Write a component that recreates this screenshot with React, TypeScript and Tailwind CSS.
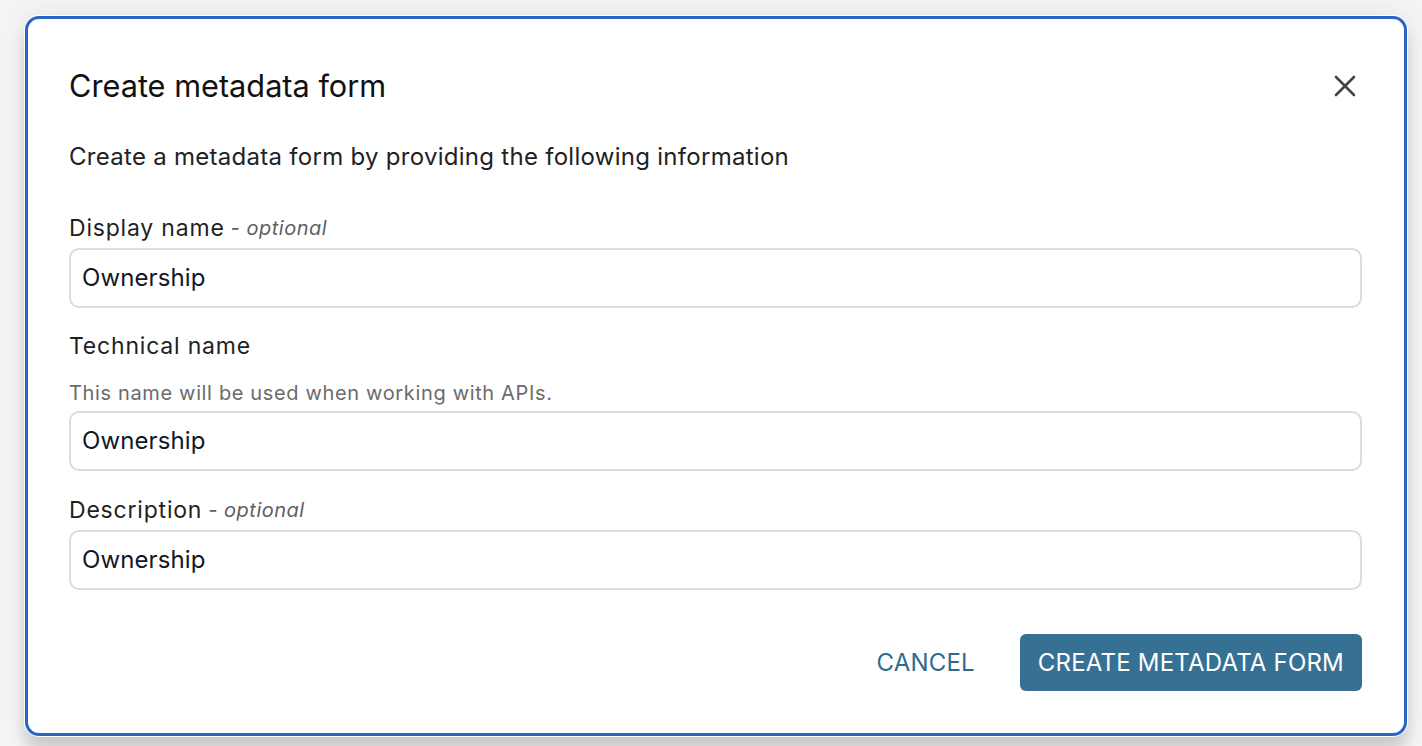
import React from "react";

const font = { fontFamily: "Inter, 'Noto Sans', sans-serif" };

function Field({ label, optional, helper, value }: { label: string; optional?: boolean; helper?: string; value: string }) {
  return (
    <div className="flex flex-col">
      <div className={`h-[30px] flex items-center text-[23px] tracking-[0.8px] text-[#1f1f1f] ${helper ? "" : "mb-[5px]"}`}>
        <span>{label}</span>
        {optional && <span className="ml-[6px] text-[20px] tracking-[0.5px] italic text-[#5f5f5f]">- optional</span>}
      </div>
      {helper && (
        <div className="mt-[19px] mb-[5px] h-[26px] flex items-center text-[20px] tracking-[0.65px] text-[#6b6b6b]">{helper}</div>
      )}
      <div className="h-[60px] rounded-[10px] border-2 border-[#d9dce0] bg-white flex items-center pl-[11px] text-[24px] tracking-[0.1px] text-[#111827]">
        {value}
      </div>
    </div>
  );
}

export default function App() {
  return (
    <div className="w-[1422px] h-[746px] overflow-hidden bg-[#f4f4f4] pt-[16px] pl-[25px]" style={font}>
      <div className="w-[1382px] h-[720px] rounded-[14px] border-[3px] border-[#2766c8] bg-white shadow-[0_0_0_1px_#ffffff,0_16px_14px_rgba(0,0,0,0.14),0_0_24px_rgba(0,0,0,0.08)] pl-[41px] pr-[42px] pt-[47px] flex flex-col">
        <div className="h-[40px] flex items-center justify-between">
          <h1 className="text-[30.7px] text-[#111111] leading-none">Create metadata form</h1>
          <button className="w-[24px] h-[24px] mr-[5px] flex items-center justify-center">
            <svg width="22" height="22" viewBox="0 0 22 22" fill="none" stroke="#444444" strokeWidth="2.6" strokeLinecap="round">
              <path d="M2 2L20 20M20 2L2 20" />
            </svg>
          </button>
        </div>
        <p className="mt-[35px] h-[32px] flex items-center text-[24px] tracking-[0.28px] text-[#222222]">
          Create a metadata form by providing the following information
        </p>
        <div className="mt-[40px]">
          <Field label="Display name" optional value="Ownership" />
        </div>
        <div className="mt-[23px]">
          <Field label="Technical name" helper="This name will be used when working with APIs." value="Ownership" />
        </div>
        <div className="mt-[24px]">
          <Field label="Description" optional value="Ownership" />
        </div>
        <div className="mt-[44px] flex justify-end items-center gap-[45px]">
          <button className="text-[24px] text-[#2f6b8f] tracking-[0.2px]">CANCEL</button>
          <button className="h-[57px] px-[18px] rounded-[6px] bg-[#367194] text-white text-[24px] tracking-[0.2px]">
            CREATE METADATA FORM
          </button>
        </div>
      </div>
    </div>
  );
}
